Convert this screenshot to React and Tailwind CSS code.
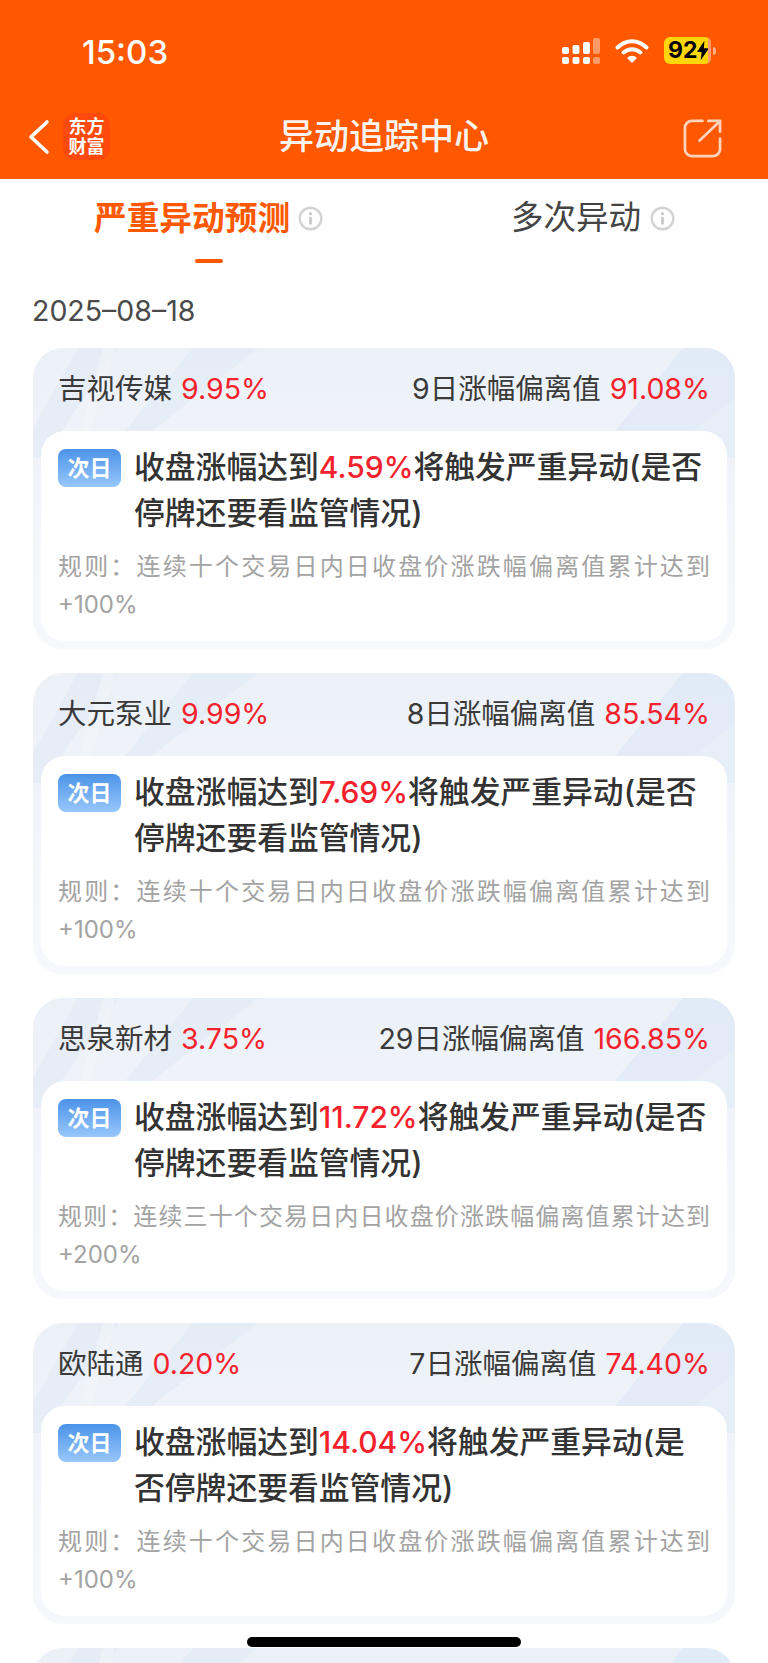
const FONT = "font-['Inter','Noto_Sans_CJK_SC',sans-serif]";

const stocks = [
  { name: "吉视传媒", change: "9.95%", days: "9日涨幅偏离值", dev: "91.08%", target: "4.59%", lead: "(是否", tail: "停牌还要看监管情况)", rule: "规则\uFF1A连续十个交易日内日收盘价涨跌幅偏离值累计达到+100%" },
  { name: "大元泵业", change: "9.99%", days: "8日涨幅偏离值", dev: "85.54%", target: "7.69%", lead: "(是否", tail: "停牌还要看监管情况)", rule: "规则\uFF1A连续十个交易日内日收盘价涨跌幅偏离值累计达到+100%" },
  { name: "思泉新材", change: "3.75%", days: "29日涨幅偏离值", dev: "166.85%", target: "11.72%", lead: "(是否", tail: "停牌还要看监管情况)", rule: "规则\uFF1A连续三十个交易日内日收盘价涨跌幅偏离值累计达到+200%" },
  { name: "欧陆通", change: "0.20%", days: "7日涨幅偏离值", dev: "74.40%", target: "14.04%", lead: "(是", tail: "否停牌还要看监管情况)", rule: "规则\uFF1A连续十个交易日内日收盘价涨跌幅偏离值累计达到+100%" },
];

function InfoIcon() {
  return (
    <svg width="25" height="25" viewBox="0 0 25 25" fill="none">
      <circle cx="12.5" cy="12.5" r="10.8" stroke="#d2d3d5" strokeWidth="2.4" />
      <circle cx="12.5" cy="7.8" r="1.5" fill="#c4c5c7" />
      <rect x="11.2" y="10.8" width="2.6" height="8" rx="1.2" fill="#c4c5c7" />
    </svg>
  );
}

function CardDecor() {
  return (
    <svg className="absolute top-0 left-0 pointer-events-none" width="702" height="110" viewBox="0 0 702 110">
      <polygon points="0,80 45,0 85,0 10,110 0,110" fill="#e1eaf5" opacity="0.6" />
      <polygon points="40,110 70,0 82,0 50,110" fill="#f1f5fa" opacity="0.7" />
      <polygon points="70,110 160,0 225,0 110,90 100,110" fill="#dfe9f4" opacity="0.6" />
      <polygon points="560,110 650,0 702,0 702,60 640,110" fill="#dfe9f6" opacity="0.8" />
      <polygon points="625,110 702,50 702,110" fill="#e6eef8" />
    </svg>
  );
}

function StockCard({ item }) {
  return (
    <div className="relative overflow-hidden rounded-[30px] bg-gradient-to-b from-[#ecf1f8] to-[#f6f8fc] p-2 pt-0">
      <CardDecor />
      <div className="relative flex h-[83px] items-center justify-between px-[17px] text-[28.5px] text-[#3a3a3a]">
        <div>
          {item.name}
          <span className="ml-[9px] text-[#f5222d]">{item.change}</span>
        </div>
        <div>
          {item.days}
          <span className="ml-[9px] text-[#f5222d]">{item.dev}</span>
        </div>
      </div>
      <div className="relative rounded-[24px] bg-white pt-[13px] pr-[17px] pb-[17px] pl-[17px]">
        <div className="flex gap-[13px]">
          <div className="mt-[5px] flex h-[38px] w-[63px] shrink-0 items-center justify-center rounded-lg bg-gradient-to-b from-[#4b93e8] to-[#97c7fb] text-[22px] font-semibold text-white">
            次日
          </div>
          <div className="text-[30.8px] leading-[45px] font-medium whitespace-nowrap text-[#333333]">
            <div>
              收盘涨幅达到<span className="text-[30px] text-[#f5222d]">{item.target}</span>将触发严重异动{item.lead}
            </div>
            <div>{item.tail}</div>
          </div>
        </div>
        <p className="mt-[13px] text-justify text-[24px] leading-[38px] text-[#a3a3a3]">{item.rule}</p>
      </div>
    </div>
  );
}

export default function App() {
  return (
    <div className={`relative h-[1663px] w-[768px] overflow-hidden bg-white ${FONT}`}>
      {/* top orange bar */}
      <div className="h-[179px] bg-[#ff5800] text-white">
        <div className="flex h-[107px] items-start justify-between pt-[32px] pr-[52px] pl-[82px]">
          <span className="text-[33px] leading-[40px] font-medium">15:03</span>
          <div className="mt-[5px] flex items-center gap-[15px]">
            <svg width="38" height="26" viewBox="0 0 38 26" fill="white">
              <rect x="0" y="9" width="7" height="7" rx="2" />
              <rect x="0" y="19" width="7" height="7" rx="2" />
              <rect x="10.500" y="7" width="7" height="9" rx="2" />
              <rect x="10.500" y="19" width="7" height="7" rx="2" />
              <rect x="21" y="4" width="7" height="12" rx="2" />
              <rect x="21" y="19" width="7" height="7" rx="2" />
              <rect x="31" y="0" width="7" height="16" rx="2" opacity="0.4" />
              <rect x="31" y="19" width="7" height="7" rx="2" opacity="0.4" />
            </svg>
            <svg width="34" height="26" viewBox="0 0 34 26" fill="none" stroke="white" strokeLinecap="round">
              <path d="M2.500 9.500C11 1 23 1 31.500 9.500" strokeWidth="4" />
              <path d="M8.500 14.500C13.500 10 20.500 10 25.500 14.500" strokeWidth="4" />
              <path d="M13 20l4 4 4-4c-2.200-2-5.800-2-8 0z" fill="white" stroke="white" strokeWidth="1.500" strokeLinejoin="round" />
            </svg>
            <div className="flex items-center gap-[2px]">
              <div className="relative flex h-[27px] w-[47px] items-center overflow-hidden rounded-[6px] bg-[#ffd60a] pl-[4px] text-[23px] leading-none font-bold text-black">
                92
                <svg className="shrink-0" width="12" height="21" viewBox="0 0 13 21" fill="black">
                  <path d="M8 0L0 12h5l-1 9 9-13H7.500z" />
                </svg>
                <div className="absolute top-0 right-0 h-full w-[3px] bg-[#ff9a70]" />
              </div>
              <div className="h-[8px] w-[3px] rounded-r-full bg-white/50" />
            </div>
          </div>
        </div>
        <div className="relative flex h-[72px] items-start justify-center">
          <div className="absolute top-[6px] left-[28px] flex items-center gap-[13px]">
            <svg width="22" height="36" viewBox="0 0 22 36" fill="none" stroke="white" strokeWidth="3.600" strokeLinecap="round" strokeLinejoin="round">
              <path d="M19 3L3 18l16 15" />
            </svg>
            <div className="flex h-[47px] w-[47px] flex-col items-center justify-center rounded-[12px] bg-[#ff4a0e] text-[18px] leading-[20px] font-bold">
              <span>东方</span>
              <span>财富</span>
            </div>
          </div>
          <span className="mt-[4px] text-[35px] leading-[50px] font-medium text-[#fdf3ee]">异动追踪中心</span>
          <svg className="absolute top-[12px] right-[46px]" width="39" height="39" viewBox="0 0 40 40" fill="none" stroke="#ffd2bd" strokeWidth="2.800" strokeLinecap="round" strokeLinejoin="round">
            <path d="M20 2H9a7 7 0 0 0-7 7v22a7 7 0 0 0 7 7h22a7 7 0 0 0 7-7V20" />
            <path d="M17 22L37 3M26 2h12v11" />
          </svg>
        </div>
      </div>

      {/* tabs */}
      <div className="grid h-[90px] grid-cols-2">
        <div className="pl-[94px]">
          <div className="flex w-fit flex-col items-center">
            <div className="flex h-[80px] items-center gap-[8px] pb-[1px]">
              <span className="text-[32.7px] font-semibold text-[#ff5800]">严重异动预测</span>
              <InfoIcon />
            </div>
            <div className="h-[4px] w-[28px] rounded-full bg-[#ff5800]" />
          </div>
        </div>
        <div className="pl-[127px]">
          <div className="flex h-[80px] items-center gap-[9px] pb-[1px]">
            <span className="text-[32.5px] text-[#444444]">多次异动</span>
            <InfoIcon />
          </div>
        </div>
      </div>

      {/* date */}
      <div className="h-[79px] pt-[22px] pl-[32px] text-[28.5px] leading-[40px] text-[#4a4a4a]">2025–08–18</div>

      {/* list */}
      <div className="flex flex-col gap-[24px] px-[33px]">
        {stocks.map((item) => (
          <StockCard key={item.name} item={item} />
        ))}
        {/* next card, only its top edge is on screen */}
        <div className="relative h-[60px] overflow-hidden rounded-t-[30px] bg-[#ecf1f8]">
          <CardDecor />
        </div>
      </div>

      {/* home indicator */}
      <div className="absolute bottom-[16px] left-[247px] h-[10px] w-[274px] rounded-full bg-black" />
    </div>
  );
}
